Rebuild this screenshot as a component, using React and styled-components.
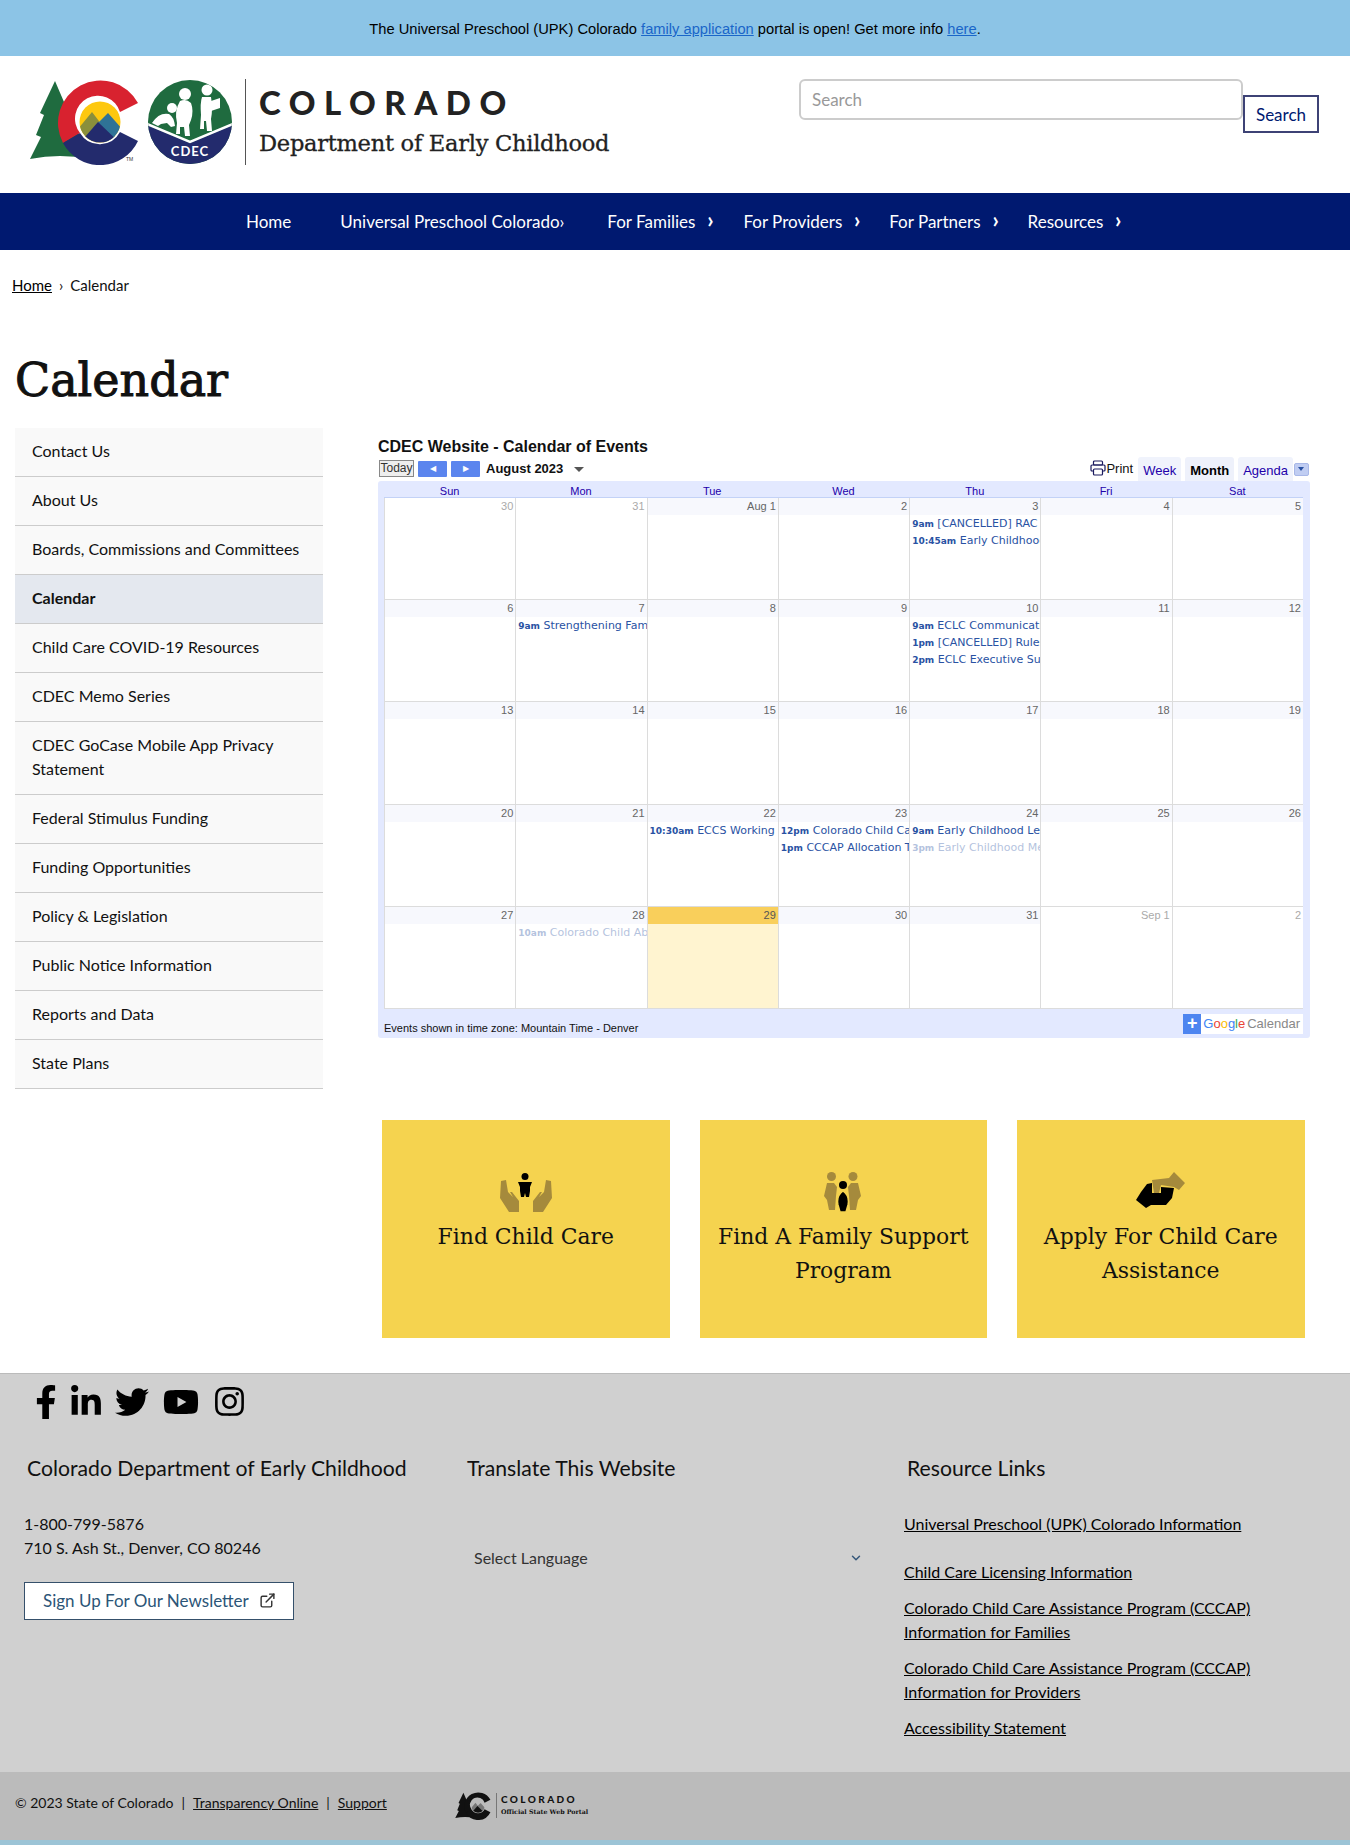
import React from 'react'
import styled, { createGlobalStyle } from 'styled-components'
import { FaFacebookF, FaLinkedinIn, FaTwitter, FaYoutube, FaInstagram } from 'react-icons/fa'
import { ChevronDown, ExternalLink } from 'lucide-react'

const sideLinks = [
  'Contact Us', 'About Us', 'Boards, Commissions and Committees', 'Calendar', 'Child Care COVID-19 Resources',
  'CDEC Memo Series', 'CDEC GoCase Mobile App Privacy Statement', 'Federal Stimulus Funding', 'Funding Opportunities',
  'Policy & Legislation', 'Public Notice Information', 'Reports and Data', 'State Plans',
]

const navItems = [
  { label: 'Home', after: 49 },
  { label: 'Universal Preschool Colorado›', after: 43 },
  { label: 'For Families', chevron: true, after: 27 },
  { label: 'For Providers', chevron: true, after: 26 },
  { label: 'For Partners', chevron: true, after: 26 },
  { label: 'Resources', chevron: true, after: 0 },
]

const weeks = [
  [{ d: '30', out: true }, { d: '31', out: true }, { d: 'Aug 1' }, { d: '2' },
    { d: '3', ev: [['9am', '[CANCELLED] RAC Meeting'], ['10:45am', 'Early Childhood Council']] }, { d: '4' }, { d: '5' }],
  [{ d: '6' }, { d: '7', ev: [['9am', 'Strengthening Families']] }, { d: '8' }, { d: '9' },
    { d: '10', ev: [['9am', 'ECLC Communications'], ['1pm', '[CANCELLED] Rules Meeting'], ['2pm', 'ECLC Executive Summit']] }, { d: '11' }, { d: '12' }],
  [{ d: '13' }, { d: '14' }, { d: '15' }, { d: '16' }, { d: '17' }, { d: '18' }, { d: '19' }],
  [{ d: '20' }, { d: '21' }, { d: '22', ev: [['10:30am', 'ECCS Working Group']] },
    { d: '23', ev: [['12pm', 'Colorado Child Care Board'], ['1pm', 'CCCAP Allocation Team']] },
    { d: '24', ev: [['9am', 'Early Childhood Leadership'], ['3pm', 'Early Childhood Meeting', true]] }, { d: '25' }, { d: '26' }],
  [{ d: '27' }, { d: '28', ev: [['10am', 'Colorado Child Abuse', true]] }, { d: '29', today: true }, { d: '30' }, { d: '31' },
    { d: 'Sep 1', out: true }, { d: '2', out: true }],
]

const resourceLinks = [
  'Universal Preschool (UPK) Colorado Information',
  'Child Care Licensing Information',
  'Colorado Child Care Assistance Program (CCCAP) Information for Families',
  'Colorado Child Care Assistance Program (CCCAP) Information for Providers',
  'Accessibility Statement',
]

function ColoradoMark({ mono }) {
  const red = mono ? '#111' : '#d8222f'
  const navy = mono ? '#111' : '#232b6d'
  const green = mono ? '#111' : '#1f6b3f'
  const id = mono ? 'monoClip' : 'colorClip'
  return (
    <svg viewBox="0 0 112 86" width={mono ? 37 : 112} height={mono ? 28 : 86}>
      <path d="M25 2 L37 30 L60 80 Q30 74 0 80 L11 58 L6 56 L14 36 L10 34 Z" fill={green} />
      <path d="M108 24 A42 42 0 1 0 33 64 L50 54 A23 23 0 1 1 90 33 Z" fill={red} />
      <path d="M33 64 A42 42 0 0 0 108 62 L90 53 A23 23 0 0 1 50 54 Z" fill={navy} />
      <clipPath id={id}><circle cx="70" cy="43" r="20.5" /></clipPath>
      <g clipPath={`url(#${id})`}>
        <rect x="48" y="20" width="44" height="46" fill={mono ? '#bbb' : '#fdc80f'} />
        <path d="M48 50 L62 33 L72 46 L60 66 L48 66 Z" fill={mono ? '#777' : '#8a8f3c'} />
        <path d="M68 44 L78 34 L92 50 L92 66 L76 66 Z" fill={mono ? '#777' : '#2f7396'} />
        <path d="M48 66 L68 43 L92 66 Z" fill={navy} />
      </g>
      {!mono && <text x="96" y="82" fontSize="5" fontFamily="Liberation Sans, sans-serif" fill="#333">TM</text>}
    </svg>
  )
}

function CdecMark() {
  return (
    <svg viewBox="0 0 86 86" width="86" height="86">
      <clipPath id="cdecClip"><circle cx="43" cy="43" r="42" /></clipPath>
      <g clipPath="url(#cdecClip)">
        <rect width="86" height="86" fill="#1f6b3f" />
        <path d="M0 46 L43 64 L86 46 L86 86 L0 86 Z" fill="#232b6d" />
        <path d="M0 45 L43 63 L86 45" fill="none" stroke="#fff" strokeWidth="2.5" />
        <g fill="#fff">
          <circle cx="38" cy="15" r="6" />
          <path d="M33 22 Q39 19 44 24 Q47 32 44 41 L42 46 L43 57 L38 57 L37 48 L33 48 L33 55 L29 55 L30 44 Q27 32 33 22 Z" />
          <circle cx="60" cy="11" r="5.5" />
          <path d="M55 18 L64 18 Q66 30 64 40 L65 52 L60 52 L59 42 L57 42 L57 50 L53 50 L54 36 Q53 24 55 18 Z" />
          <path d="M64 22 L73 19 L73 29 L64 32 Z" />
          <circle cx="25" cy="29" r="5" />
          <path d="M5 44 Q12 33 22 35 Q27 38 28 47 L24 48 L20 44 L14 45 L11 47 Z" />
        </g>
        <text x="43" y="77" textAnchor="middle" fontSize="13" fontWeight="700" letterSpacing="1" fontFamily="Lato, sans-serif" fill="#fff">CDEC</text>
      </g>
    </svg>
  )
}

function HandsIcon() {
  return (
    <svg viewBox="0 0 52 40" width="52" height="40">
      <path d="M1 9 L6 8 L8 20 L13 25 L10 20 L12 20 L19 29 L19 40 L9 40 L0 26 Z" fill="#a58a3c" />
      <path d="M51 9 L46 8 L44 20 L39 25 L42 20 L40 20 L33 29 L33 40 L43 40 L52 26 Z" fill="#a58a3c" />
      <circle cx="25" cy="4.5" r="3.5" fill="#000" />
      <path d="M18 10 L32 10 L30 15 L30 19 L29 25 L26 25 L25 21 L24 25 L21 25 L20 19 L20 15 Z" fill="#000" />
    </svg>
  )
}

function FamilyIcon() {
  return (
    <svg viewBox="0 0 38 40" width="38" height="40">
      <g fill="#a58a3c">
        <circle cx="7.5" cy="4.5" r="4.5" /><circle cx="29" cy="4.5" r="4.5" />
        <path d="M3 11 L10 11 L13 15 L12 24 L11 38 L5 38 L3 28 L0 24 Z" />
        <path d="M34 11 L27 11 L24 15 L25 24 L26 38 L32 38 L34 28 L37 24 Z" />
      </g>
      <circle cx="19" cy="13" r="4" fill="#000" />
      <path d="M19 19 Q26 24 24 33 L22 40 L16 40 L14 33 Q12 24 19 19 Z" fill="#000" stroke="#f5d34f" strokeWidth="1.5" />
    </svg>
  )
}

function HandshakeIcon() {
  return (
    <svg viewBox="0 0 49 36" width="49" height="36">
      <path d="M11 12 L16 11 L16 21 L25 21 L25 15 L38 16 L36 26 L30 33 L15 33 L10 36 L0 28 L5 20 Z" fill="#000" />
      <path d="M16 8 L33 6 L38 0 L49 11 L43 18 L38 15 L25 13 L23 21 L18 21 Z" fill="#a58a3c" />
    </svg>
  )
}

export default function App() {
  return (
    <>
      <GlobalStyle />
      <Banner>
        The Universal Preschool (UPK) Colorado <a href="#">family application</a> portal is open! Get more info <a href="#">here</a>.
      </Banner>
      <Header>
        <Brand>
          <ColoradoMark />
          <CdecMark />
          <BrandDivider />
          <BrandText>
            <BrandState>COLORADO</BrandState>
            <BrandDept>Department of Early Childhood</BrandDept>
          </BrandText>
        </Brand>
        <SearchForm>
          <SearchInput placeholder="Search" />
          <SearchButton>Search</SearchButton>
        </SearchForm>
      </Header>
      <Nav>
        {navItems.map((item) => (
          <NavItem key={item.label} $after={item.after}>
            {item.label}
            {item.chevron && <NavChevron>›</NavChevron>}
          </NavItem>
        ))}
      </Nav>
      <Breadcrumb><a href="#">Home</a><span>›</span>Calendar</Breadcrumb>
      <Title>Calendar</Title>
      <Content>
        <Sidebar>
          {sideLinks.map((link) => (
            <SideLink key={link} $active={link === 'Calendar'}>{link}</SideLink>
          ))}
        </Sidebar>
        <Main>
          <CalTitle>CDEC Website - Calendar of Events</CalTitle>
          <CalToolbar>
            <TodayBtn>Today</TodayBtn>
            <ArrowBtn>◀</ArrowBtn>
            <ArrowBtn>▶</ArrowBtn>
            <MonthLabel>August 2023</MonthLabel>
            <Caret />
            <ToolbarRight>
              <PrintLink>
                <svg viewBox="0 0 16 16" width="16" height="16" fill="none" stroke="#1a1a5e" strokeWidth="1.2">
                  <rect x="3.5" y="1" width="9" height="4" rx="1" />
                  <rect x="1" y="5" width="14" height="6" rx="1" />
                  <rect x="3.5" y="9" width="9" height="6" rx="1" fill="#fff" />
                </svg>
                Print
              </PrintLink>
              <Tab>Week</Tab>
              <Tab $active>Month</Tab>
              <Tab>Agenda</Tab>
              <TabMenu />
            </ToolbarRight>
          </CalToolbar>
          <CalFrame>
            <DayHeads>
              {['Sun', 'Mon', 'Tue', 'Wed', 'Thu', 'Fri', 'Sat'].map((d) => <DayHead key={d}>{d}</DayHead>)}
            </DayHeads>
            <CalGrid>
              {weeks.flat().map((cell, i) => (
                <Cell key={i} $today={cell.today}>
                  <DateBand $out={cell.out} $today={cell.today}>{cell.d}</DateBand>
                  {cell.ev && cell.ev.map(([time, name, faded]) => (
                    <EventLine key={time + name} $faded={faded}>
                      <b>{time}</b> {name}
                    </EventLine>
                  ))}
                </Cell>
              ))}
            </CalGrid>
            <CalFooter>
              <span>Events shown in time zone: Mountain Time - Denver</span>
              <GoogleBadge>
                <GooglePlus>+</GooglePlus>
                <GoogleWord>
                  <i style={{ color: '#4285f4' }}>G</i><i style={{ color: '#ea4335' }}>o</i><i style={{ color: '#fbbc05' }}>o</i>
                  <i style={{ color: '#4285f4' }}>g</i><i style={{ color: '#34a853' }}>l</i><i style={{ color: '#ea4335' }}>e</i>
                </GoogleWord>
                <span>Calendar</span>
              </GoogleBadge>
            </CalFooter>
          </CalFrame>
          <Cards>
            <Card><HandsIcon /><CardLabel>Find Child Care</CardLabel></Card>
            <Card><FamilyIcon /><CardLabel>Find A Family Support Program</CardLabel></Card>
            <Card><HandshakeIcon /><CardLabel $short>Apply For Child Care Assistance</CardLabel></Card>
          </Cards>
        </Main>
      </Content>
      <Footer>
        <Socials>
          <FaFacebookF size={34} />
          <SocialIn><FaLinkedinIn size={34} /></SocialIn>
          <SocialTw><FaTwitter size={34} /></SocialTw>
          <FaYoutube size={36} />
          <FaInstagram size={33} />
        </Socials>
        <FooterCols>
          <div>
            <FooterHeading>Colorado Department of Early Childhood</FooterHeading>
            <Contact>1-800-799-5876<br />710 S. Ash St., Denver, CO 80246</Contact>
            <NewsletterBtn>Sign Up For Our Newsletter <ExternalLink size={17} /></NewsletterBtn>
          </div>
          <div>
            <FooterHeading>Translate This Website</FooterHeading>
            <LangSelect>Select Language <ChevronDown size={14} color="#35577a" strokeWidth={2.5} /></LangSelect>
          </div>
          <div>
            <FooterHeading>Resource Links</FooterHeading>
            <ResourceList>
              {resourceLinks.map((link) => <li key={link}><a href="#">{link}</a></li>)}
            </ResourceList>
          </div>
        </FooterCols>
      </Footer>
      <BottomBar>
        <Legal>
          © 2023 State of Colorado<Pipe>|</Pipe><a href="#">Transparency Online</a><Pipe>|</Pipe><a href="#">Support</a>
        </Legal>
        <PortalLogo>
          <ColoradoMark mono />
          <PortalText>
            <PortalState>COLORADO</PortalState>
            <PortalSub>Official State Web Portal</PortalSub>
          </PortalText>
        </PortalLogo>
      </BottomBar>
      <BottomStrip />
    </>
  )
}

const GlobalStyle = createGlobalStyle`
  html, body { margin: 0; padding: 0; background: #fff; }
  body { font-family: Lato, 'Noto Sans', sans-serif; font-size: 16px; color: #111; }
  * { box-sizing: border-box; }
`

const Banner = styled.div`
  height: 56px;
  background: #8cc4e6;
  font-family: 'Liberation Sans', Arial, sans-serif;
  font-size: 14.7px;
  color: #000;
  text-align: center;
  line-height: 58px;
  a { color: #1a66c9; }
`

const Header = styled.header`
  height: 137px;
  display: flex;
  justify-content: space-between;
  padding: 23px 31px 0 30px;
`

const Brand = styled.div`
  display: flex;
  align-items: flex-start;
  height: 86px;
  svg + svg { margin-left: 5px; }
`

const BrandDivider = styled.div`
  width: 1px;
  height: 86px;
  background: #555;
  margin: 0 13px 0 12px;
`

const BrandText = styled.div`
  display: flex;
  flex-direction: column;
`

const BrandState = styled.div`
  font-family: Lato, sans-serif;
  font-weight: 900;
  font-size: 33px;
  line-height: 40px;
  letter-spacing: 8.5px;
  margin-top: 3px;
  color: #222;
`

const BrandDept = styled.div`
  font-family: 'DejaVu Serif', serif;
  font-size: 22.6px;
  line-height: 30px;
  margin-top: 6px;
  color: #222;
  letter-spacing: -0.3px;
  -webkit-text-stroke: 0.3px #222;
`

const SearchForm = styled.div`
  display: flex;
  align-items: flex-start;
`

const SearchInput = styled.input`
  width: 444px;
  height: 41px;
  border: 2px solid #ccc;
  border-radius: 6px;
  padding: 0 11px;
  font-family: Lato, sans-serif;
  font-size: 17px;
  &::placeholder { color: #999; }
`

const SearchButton = styled.button`
  width: 76px;
  height: 38px;
  margin-top: 16px;
  padding: 0;
  background: #fff;
  border: 2px solid #3d4275;
  color: #001970;
  font-family: Lato, sans-serif;
  font-size: 17px;
`

const Nav = styled.nav`
  height: 57px;
  background: #001970;
  display: flex;
  align-items: center;
  padding-left: 246px;
`

const NavItem = styled.a`
  color: #fff;
  font-size: 17px;
  display: flex;
  align-items: center;
  margin-right: ${(p) => p.$after}px;
`

const NavChevron = styled.span`
  margin: -3px 0 0 9px;
  font-weight: 700;
  font-size: 22px;
  line-height: 1;
  width: 12px;
  text-align: center;
`

const Breadcrumb = styled.div`
  padding: 25px 0 0 12px;
  font-size: 15px;
  line-height: 20px;
  a { color: #000; }
  span { margin: 0 7px; }
`

const Title = styled.h1`
  margin: 57px 0 0 15px;
  font-family: 'DejaVu Serif', serif;
  font-weight: 400;
  -webkit-text-stroke: 1px #111;
  font-size: 46px;
  line-height: 56px;
  height: 76px;
`

const Content = styled.div`
  display: flex;
  padding: 0 0 35px 15px;
`

const Sidebar = styled.aside`
  width: 308px;
  flex-shrink: 0;
  align-self: flex-start;
`

const SideLink = styled.div`
  padding: 11px 17px 13px;
  min-height: 49px;
  line-height: 24px;
  font-size: 16px;
  background: ${(p) => (p.$active ? '#e4e8ef' : '#f9f9f9')};
  font-weight: ${(p) => (p.$active ? 700 : 400)};
  border-bottom: 1px solid #ccc;
  color: #111;
`

const Main = styled.main`
  width: 932px;
  margin-left: 55px;
`

const CalTitle = styled.div`
  font-family: 'Liberation Sans', Arial, sans-serif;
  font-weight: 700;
  font-size: 16px;
  line-height: 18px;
  margin-top: 10px;
`

const CalToolbar = styled.div`
  display: flex;
  align-items: center;
  height: 25px;
  font-family: 'Liberation Sans', Arial, sans-serif;
  padding-left: 1px;
`

const TodayBtn = styled.div`
  width: 35px;
  height: 17px;
  border: 1px solid #888;
  background: #eee;
  font-size: 12px;
  line-height: 15px;
  text-align: center;
  color: #333;
`

const ArrowBtn = styled.div`
  width: 29px;
  height: 16px;
  margin-left: 4px;
  background: #5b85ee;
  color: #fff;
  font-size: 8px;
  line-height: 16px;
  text-align: center;
  border-radius: 1px;
`

const MonthLabel = styled.div`
  font-weight: 700;
  font-size: 13px;
  margin-left: 6px;
`

const Caret = styled.div`
  margin: 2px 0 0 11px;
  border-left: 5px solid transparent;
  border-right: 5px solid transparent;
  border-top: 5px solid #555;
`

const ToolbarRight = styled.div`
  margin-left: auto;
  display: flex;
  align-items: flex-end;
  height: 24px;
  gap: 4px;
  padding-right: 1px;
`

const PrintLink = styled.div`
  display: flex;
  align-items: center;
  font-size: 13px;
  height: 22px;
  margin-right: 1px;
  padding-bottom: 3px;
`

const Tab = styled.div`
  padding: 0 5px;
  height: 24px;
  line-height: 28px;
  font-size: 13px;
  background: ${(p) => (p.$active ? '#eef1fb' : '#f0f3fc')};
  color: ${(p) => (p.$active ? '#000' : '#2200aa')};
  font-weight: ${(p) => (p.$active ? 700 : 400)};
  border-radius: 3px 3px 0 0;
`

const TabMenu = styled.div`
  width: 15px;
  height: 13px;
  margin: 0 0 5px -3px;
  background: #c0cdf2;
  border: 1px solid #a8b8e8;
  border-radius: 2px;
  position: relative;
  &::after {
    content: '';
    position: absolute;
    left: 3px;
    top: 3px;
    border-left: 3px solid transparent;
    border-right: 3px solid transparent;
    border-top: 4px solid #2952a3;
  }
`

const CalFrame = styled.div`
  background: #e3e9ff;
  padding: 0 7px 0 6px;
  border-radius: 3px;
  font-family: 'Liberation Sans', Arial, sans-serif;
`

const DayHeads = styled.div`
  display: grid;
  grid-template-columns: repeat(7, 1fr);
  height: 17px;
  border-bottom: 1px solid #c3d2f7;
`

const DayHead = styled.div`
  text-align: center;
  font-size: 11px;
  line-height: 20px;
  color: #2200aa;
`

const CalGrid = styled.div`
  display: grid;
  grid-template-columns: repeat(7, 1fr);
  grid-auto-rows: 102.2px;
  background: #fff;
`

const Cell = styled.div`
  border-left: 1px solid #dcdcdc;
  border-bottom: 1px solid #dcdcdc;
  background: ${(p) => (p.$today ? '#fff4d0' : '#fff')};
  overflow: hidden;
  min-width: 0;
`

const DateBand = styled.div`
  height: 17px;
  padding-right: 2px;
  text-align: right;
  font-size: 11px;
  line-height: 17px;
  color: ${(p) => (p.$out ? '#aaa' : p.$today ? '#555' : '#666')};
  background: ${(p) => (p.$today ? '#f9cf5b' : p.$out ? '#fff' : '#f7f8fd')};
`

const EventLine = styled.div`
  height: 17px;
  padding-left: 2px;
  font-family: 'DejaVu Sans', Verdana, sans-serif;
  font-size: 11px;
  line-height: 17px;
  white-space: nowrap;
  overflow: hidden;
  color: #2952a3;
  opacity: ${(p) => (p.$faded ? 0.35 : 1)};
  b { font-size: 9px; }
`

const CalFooter = styled.div`
  height: 29px;
  display: flex;
  justify-content: space-between;
  align-items: flex-end;
  font-size: 11px;
  padding-bottom: 4px;
`

const GoogleBadge = styled.div`
  display: flex;
  align-items: center;
  height: 20px;
  background: #fff;
  font-size: 13px;
  color: #888;
  padding-right: 3px;
`

const GooglePlus = styled.div`
  width: 18px;
  height: 20px;
  background: #4d85f0;
  color: #fff;
  font-weight: 700;
  font-size: 18px;
  line-height: 19px;
  text-align: center;
  margin-right: 2px;
`

const GoogleWord = styled.span`
  margin-right: 2px;
  i { font-style: normal; }
`

const Cards = styled.div`
  display: grid;
  grid-template-columns: repeat(3, 287.5px);
  gap: 30px;
  margin: 82px 0 0 4px;
`

const Card = styled.div`
  height: 218px;
  background: #f5d34f;
  display: flex;
  flex-direction: column;
  align-items: center;
  padding: 52px 14px 0;
`

const CardLabel = styled.div`
  font-family: 'DejaVu Serif', serif;
  font-size: 21.9px;
  line-height: 34px;
  text-align: center;
  margin-top: ${(p) => (p.$short ? 12 : 8)}px;
  color: #111;
`

const Footer = styled.footer`
  height: 399px;
  background: #d0d0d0;
  border-top: 1px solid #bbb;
  padding-left: 24px;
`

const Socials = styled.div`
  display: flex;
  align-items: center;
  gap: 14px;
  height: 46px;
  padding: 10px 0 0 5px;
  color: #000;
`

const SocialIn = styled.span`
  display: flex;
  margin-left: -8px;
`

const SocialTw = styled.span`
  display: flex;
  margin-left: -2px;
`

const FooterCols = styled.div`
  display: grid;
  grid-template-columns: 440px 440px 1fr;
  margin-top: 34px;
`

const FooterHeading = styled.h3`
  margin: 0 0 30px 3px;
  font-family: Lato, sans-serif;
  font-weight: 400;
  font-size: 21.2px;
  line-height: 28px;
  color: #111;
`

const Contact = styled.div`
  font-size: 16px;
  line-height: 24px;
`

const NewsletterBtn = styled.a`
  display: flex;
  align-items: center;
  justify-content: space-between;
  width: 270px;
  height: 38px;
  margin-top: 22px;
  padding: 0 17px 0 18px;
  background: #fff;
  border: 1px solid #35506b;
  color: #2c5577;
  font-size: 17px;
  svg { color: #333; }
`

const LangSelect = styled.div`
  display: flex;
  align-items: center;
  justify-content: space-between;
  width: 401px;
  height: 24px;
  margin-top: 64px;
  padding: 0 2px 0 10px;
  font-size: 16px;
  color: #333;
`

const ResourceList = styled.ul`
  list-style: none;
  margin: 0;
  padding: 0;
  max-width: 380px;
  li { line-height: 24px; margin-bottom: 12px; }
  li:first-child { margin-bottom: 24px; }
  a { color: #000; font-size: 16px; }
`

const BottomBar = styled.div`
  height: 68px;
  background: #bbb;
  display: flex;
  align-items: center;
  padding-left: 15px;
`

const Legal = styled.div`
  width: 440px;
  font-size: 14px;
  margin-top: -6px;
  a { color: #111; }
`

const Pipe = styled.span`
  margin: 0 8px;
`

const PortalLogo = styled.div`
  display: flex;
  align-items: center;
  height: 28px;
`

const PortalText = styled.div`
  margin-left: 4px;
  padding-left: 4px;
  border-left: 1px solid #777;
`

const PortalState = styled.div`
  font-weight: 900;
  font-size: 10px;
  line-height: 13px;
  letter-spacing: 2.4px;
  color: #111;
`

const PortalSub = styled.div`
  font-family: 'DejaVu Serif', serif;
  font-weight: 700;
  font-size: 6.3px;
  line-height: 12px;
  color: #111;
`

const BottomStrip = styled.div`
  height: 5px;
  background: #9cc4d6;
`
